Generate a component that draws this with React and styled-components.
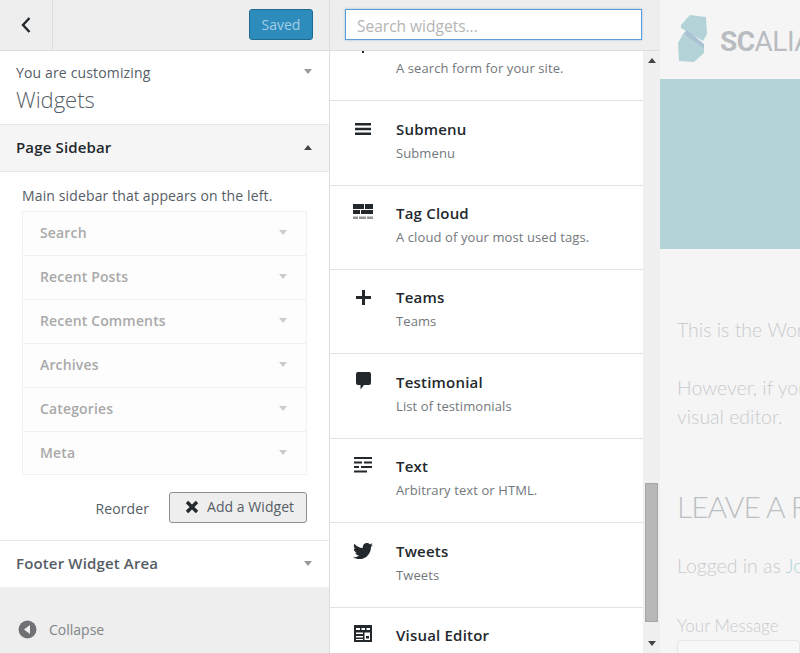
import styled, { createGlobalStyle } from "styled-components";
import { FaTwitter } from "react-icons/fa";

const Global = createGlobalStyle`
    html, body { margin: 0; padding: 0; height: 100%; }
    body { font-family: "Open Sans", sans-serif; background: #f5f5f5; overflow: hidden; }
    #root { height: 100%; }
`

const Page = styled.div`
    display: flex;
    width: 800px;
    height: 653px;
    overflow: hidden;
`

const Sidebar = styled.div`
    width: 330px;
    height: 653px;
    flex: none;
    display: flex;
    flex-direction: column;
    background: #eeeeee;
    border-right: 1px solid #dddddd;
    box-sizing: border-box;
`

const TopBar = styled.div`
    height: 51px;
    flex: none;
    display: flex;
    align-items: center;
    justify-content: space-between;
    box-sizing: border-box;
    background: #eeeeee;
    border-bottom: 1px solid #dddddd;
`

const BackButton = styled.div`
    width: 53px;
    height: 50px;
    display: flex;
    align-items: center;
    justify-content: center;
    box-sizing: border-box;
    border-right: 1px solid #dddddd;
    padding-right: 1px;
`

const SavedButton = styled.div`
    width: 64px;
    height: 31px;
    margin: 0 16px 1px 0;
    display: flex;
    align-items: center;
    justify-content: center;
    box-sizing: border-box;
    background: #2e8cbd;
    border: 1px solid #1f6a93;
    border-radius: 3px;
    color: #a3cde3;
    font-size: 14px;
`

const Customizing = styled.div`
    height: 73px;
    flex: none;
    box-sizing: border-box;
    background: #fff;
    padding: 12px 16px 0;
    position: relative;
`

const Small = styled.div`
    font-size: 14px;
    line-height: 19px;
    letter-spacing: 0.15px;
    color: #555d66;
`

const Heading = styled.div`
    font-size: 22px;
    font-weight: 300;
    line-height: 30px;
    margin-top: 2px;
    color: #555d66;
`

const Arrow = styled.span`
    width: 0;
    height: 0;
    border-left: ${p => p.$size || 4}px solid transparent;
    border-right: ${p => p.$size || 4}px solid transparent;
    ${p => p.$up ? "border-bottom" : "border-top"}: ${p => (p.$size || 4) + 1}px solid ${p => p.$color || "#999"};
`

const CornerArrow = styled(Arrow)`
    position: absolute;
    right: 17px;
    top: 18px;
`

const SectionHead = styled.div`
    height: ${p => p.$height}px;
    flex: none;
    box-sizing: border-box;
    display: flex;
    align-items: center;
    justify-content: space-between;
    padding: 0 17px 2px 16px;
    background: ${p => p.$open ? "#f5f5f5" : "#fff"};
    border-top: ${p => p.$open ? "1px solid #e8e8e8" : "none"};
    border-bottom: ${p => p.$open ? "1px solid #e8e8e8" : "none"};
    font-size: 15px;
    font-weight: 600;
    letter-spacing: 0.15px;
    color: ${p => p.$open ? "#23282d" : "#555d66"};
`

const SectionBody = styled.div`
    flex: none;
    height: 369px;
    box-sizing: border-box;
    background: #fff;
    padding: 14px 22px 0;
    border-bottom: 1px solid #e8e8e8;
`

const Note = styled.div`
    font-size: 14px;
    line-height: 19px;
    letter-spacing: 0.13px;
    color: #555d66;
    margin-bottom: 6px;
`

const WidgetList = styled.div`
    width: 285px;
    box-sizing: border-box;
    border: 1px solid #f1f1f1;
    background: #fdfdfd;
`

const WidgetRow = styled.div`
    height: 44px;
    box-sizing: border-box;
    display: flex;
    align-items: center;
    justify-content: space-between;
    padding: 0 19px 2px 17px;
    font-size: 14px;
    font-weight: 600;
    letter-spacing: 0.15px;
    color: #a9a9a9;
    border-bottom: 1px solid #f1f1f1;
    &:last-child { height: 42px; border-bottom: none; }
`

const Actions = styled.div`
    display: flex;
    align-items: center;
    justify-content: flex-end;
    width: 285px;
    margin-top: 17px;
    gap: 20px;
`

const Reorder = styled.div`
    font-size: 14px;
    letter-spacing: 0.1px;
    color: #555d66;
    margin-top: 1px;
`

const AddButton = styled.div`
    width: 138px;
    height: 31px;
    box-sizing: border-box;
    display: flex;
    align-items: center;
    padding: 0 0 2px 15px;
    gap: 8px;
    background: #eeeeee;
    border: 1px solid #8f8f8f;
    border-radius: 3px;
    font-size: 14px;
    letter-spacing: 0.05px;
    color: #555d66;
`

const Collapse = styled.div`
    margin: 33px 0 0 18px;
    display: flex;
    align-items: center;
    gap: 12px;
    font-size: 14px;
    color: #808488;
`

const Middle = styled.div`
    width: 330px;
    height: 653px;
    flex: none;
    display: flex;
    flex-direction: column;
    position: relative;
    background: #fff;
`

const SearchBar = styled(TopBar)`
    padding-left: 15px;
    justify-content: flex-start;
`

const SearchBox = styled.div`
    width: 297px;
    height: 31px;
    margin-bottom: 1px;
    box-sizing: border-box;
    display: flex;
    align-items: center;
    padding: 3px 0 0 11px;
    background: #fff;
    border: 1px solid #5b9dd9;
    box-shadow: 0 0 2px rgba(91, 157, 217, 0.6);
    font-size: 15.5px;
    color: #b5b5b5;
`

const Results = styled.div`
    flex: 1;
    overflow: hidden;
    margin-right: 17px;
`

const ResultsInner = styled.div`
    margin-top: -34.2px;
`

const Result = styled.div`
    height: 84.4px;
    box-sizing: border-box;
    display: flex;
    padding: 17.4px 0 0 21px;
    border-bottom: 1px solid #e2e2e2;
    &:last-child { border-bottom: none; }
`

const ResultIcon = styled.div`
    width: 24px;
    height: 24px;
    flex: none;
    margin-right: 21px;
    color: #23282d;
    display: flex;
    align-items: flex-start;
    justify-content: center;
`

const ResultTitle = styled.div`
    font-size: 15px;
    font-weight: 600;
    line-height: 20px;
    letter-spacing: 0.2px;
    color: #23282d;
`

const ResultDesc = styled.div`
    font-size: 13px;
    line-height: 18px;
    letter-spacing: 0.1px;
    margin-top: 5px;
    color: #72777c;
`

const ScrollTrack = styled.div`
    position: absolute;
    right: 0;
    top: 51px;
    bottom: 0;
    width: 17px;
    background: #f0f0f0;
`

const ScrollThumb = styled.div`
    position: absolute;
    left: 2px;
    top: 432px;
    width: 13px;
    height: 139px;
    box-sizing: border-box;
    background: #b8b8b8;
    border: 1px solid #a6a6a6;
`

const ScrollUp = styled(Arrow)`
    position: absolute;
    left: 5px;
    top: 7px;
`

const ScrollDown = styled(Arrow)`
    position: absolute;
    left: 5px;
    bottom: 7px;
`

const Preview = styled.div`
    flex: 1;
    height: 653px;
    overflow: hidden;
    background: #f5f5f5;
    font-family: Lato, sans-serif;
    font-weight: 300;
    color: #c9cbce;
    white-space: nowrap;
`

const Brand = styled.div`
    height: 79px;
    display: flex;
    align-items: center;
    padding: 0 0 2px 17px;
    box-sizing: border-box;
    gap: 13px;
`

const BrandName = styled.div`
    font-family: Roboto, sans-serif;
    font-size: 28px;
    font-weight: 400;
    color: #b9bcc1;
    margin-top: 6px;
    letter-spacing: -0.5px;
`

const BrandBold = styled.span`
    font-weight: 700;
`

const LogoMark = styled.svg`
    flex: none;
    width: 30px;
    height: 47px;
`

const Banner = styled.div`
    height: 170px;
    background: #b3d3d8;
`

const PreviewText = styled.div`
    padding: 66px 0 0 17px;
    font-size: 19.5px;
    line-height: 29px;
`

const Para = styled.div`
    margin-bottom: 29px;
`

const Leave = styled.div`
    font-size: 30px;
    line-height: 40px;
    letter-spacing: -1px;
    margin: 55px 0 25px;
    color: #bcbfc3;
`

const Link = styled.span`
    color: #b3d3d8;
`

const Label = styled.div`
    font-size: 17px;
    margin-top: 35px;
    line-height: 22px;
`

const MessageBox = styled.div`
    margin-top: 3px;
    height: 60px;
    background: #f7f7f7;
    border: 1px solid #e6e6e6;
    border-radius: 4px;
`

const widgets = ["Search", "Recent Posts", "Recent Comments", "Archives", "Categories", "Meta"];

const BackIcon = () => (
    <svg width="12" height="18" viewBox="0 0 12 18">
        <path d="M9.5 2 L3 9 L9.5 16" fill="none" stroke="#23282d" strokeWidth="2.4" />
    </svg>
);

const CloseIcon = () => (
    <svg width="14" height="14" viewBox="0 0 14 14">
        <path d="M2 2 L12 12 M12 2 L2 12" fill="none" stroke="#23282d" strokeWidth="3.4" />
    </svg>
);

const CollapseIcon = () => (
    <svg width="19" height="19" viewBox="0 0 19 19">
        <circle cx="9.5" cy="9.5" r="9" fill="#6f7175" />
        <path d="M12 5 L12 14 L6 9.5 Z" fill="#f0f0f0" />
    </svg>
);

const Logo = () => (
    <LogoMark viewBox="0 0 30 47">
        <path d="M13 0 L29 2 L30 19 L26 26 L4 13 L4 10 Z" fill="#b3d3d8" />
        <path d="M6 19 L27 34 L27 38 L17 47 L2 46 L1 28 Z" fill="#b3d3d8" />
        <path d="M6 19 L10 15 L27 29 L27 34 Z" fill="#a9c3d2" />
    </LogoMark>
);

const SearchIcon = () => (
    <svg width="16" height="19" viewBox="0 0 16 19">
        <circle cx="8" cy="6" r="5" fill="none" stroke="currentColor" strokeWidth="2" />
        <path d="M7 11h2v8H7z" fill="currentColor" />
    </svg>
);

const MenuIcon = () => (
    <svg width="16" height="12" viewBox="0 0 16 12" style={{ marginTop: 4 }}>
        <path d="M0 0h16v2.400H0zM0 4.800h16v2.400H0zM0 9.600h16V12H0z" fill="currentColor" />
    </svg>
);

const TagIcon = () => (
    <svg width="20" height="15" viewBox="0 0 20 15" style={{ marginTop: 1 }}>
        <path d="M0 0h11v5H0zM12 0h8v5h-8zM0 6h7v4H0zM8 6h12v4H8z" fill="currentColor" />
        <path d="M0 12.500h5V15H0zM6 12.500h7V15H6zM14 12.500h6V15h-6z" fill="currentColor" opacity="0.5" />
    </svg>
);

const PlusIcon = () => (
    <svg width="15" height="15" viewBox="0 0 15 15" style={{ marginTop: 3 }}>
        <path d="M6 0h3v6h6v3H9v6H6V9H0V6h6z" fill="currentColor" />
    </svg>
);

const QuoteIcon = () => (
    <svg width="15" height="18" viewBox="0 0 15 18">
        <path d="M2 0h11a2 2 0 0 1 2 2v9a2 2 0 0 1-2 2H8l-3.500 4.500V13H2a2 2 0 0 1-2-2V2a2 2 0 0 1 2-2z" fill="currentColor" />
    </svg>
);

const TextIcon = () => (
    <svg width="18" height="16" viewBox="0 0 18 16" style={{ marginTop: 1 }}>
        <path d="M0 0h18v2H0zM0 4.500h8v2H0zM10 4.500h8v2h-8zM0 9h5v2H0zM7 9h11v2H7zM0 13.500h13v2H0z" fill="currentColor" />
    </svg>
);

const TweetIcon = () => <FaTwitter size={20} />;

const EditorIcon = () => (
    <svg width="18" height="17" viewBox="0 0 18 17">
        <path d="M0 0h18v17H0z" fill="currentColor" />
        <path d="M2 3h4v2H2zM7.500 3h3.500v2H7.500zM12.500 3h3.500v2h-3.500zM2 7.500h7V9H2zM2 11h7v1.500H2zM2 14h7v1H2zM10.500 7.500H16V15h-5.500z" fill="#fff" />
        <path d="M12 11h3v2.500h-3z" fill="currentColor" />
    </svg>
);

const results = [
    { title: "Search", desc: "A search form for your site.", icon: <SearchIcon /> },
    { title: "Submenu", desc: "Submenu", icon: <MenuIcon /> },
    { title: "Tag Cloud", desc: "A cloud of your most used tags.", icon: <TagIcon /> },
    { title: "Teams", desc: "Teams", icon: <PlusIcon /> },
    { title: "Testimonial", desc: "List of testimonials", icon: <QuoteIcon /> },
    { title: "Text", desc: "Arbitrary text or HTML.", icon: <TextIcon /> },
    { title: "Tweets", desc: "Tweets", icon: <TweetIcon /> },
    { title: "Visual Editor", desc: "", icon: <EditorIcon /> },
];

export default function App() {
    return (
        <Page>
            <Global />
            <Sidebar>
                <TopBar>
                    <BackButton><BackIcon /></BackButton>
                    <SavedButton>Saved</SavedButton>
                </TopBar>
                <Customizing>
                    <Small>You are customizing</Small>
                    <Heading>Widgets</Heading>
                    <CornerArrow />
                </Customizing>
                <SectionHead $open $height={48}>
                    Page Sidebar
                    <Arrow $up $color="#444" />
                </SectionHead>
                <SectionBody>
                    <Note>Main sidebar that appears on the left.</Note>
                    <WidgetList>
                        {widgets.map((w) => (
                            <WidgetRow key={w}>
                                {w}
                                <Arrow $color="#ccc" />
                            </WidgetRow>
                        ))}
                    </WidgetList>
                    <Actions>
                        <Reorder>Reorder</Reorder>
                        <AddButton><CloseIcon />Add a Widget</AddButton>
                    </Actions>
                </SectionBody>
                <SectionHead $height={46}>
                    Footer Widget Area
                    <Arrow />
                </SectionHead>
                <Collapse><CollapseIcon />Collapse</Collapse>
            </Sidebar>
            <Middle>
                <SearchBar>
                    <SearchBox>Search widgets...</SearchBox>
                </SearchBar>
                <Results>
                    <ResultsInner>
                        {results.map((r) => (
                            <Result key={r.title}>
                                <ResultIcon>{r.icon}</ResultIcon>
                                <div>
                                    <ResultTitle>{r.title}</ResultTitle>
                                    <ResultDesc>{r.desc}</ResultDesc>
                                </div>
                            </Result>
                        ))}
                    </ResultsInner>
                </Results>
                <ScrollTrack>
                    <ScrollUp $up $color="#444" />
                    <ScrollThumb />
                    <ScrollDown $color="#444" />
                </ScrollTrack>
            </Middle>
            <Preview>
                <Brand><Logo /><BrandName><BrandBold>SC</BrandBold>ALIA</BrandName></Brand>
                <Banner />
                <PreviewText>
                    <Para>This is the WordPress</Para>
                    <div>However, if you</div>
                    <Para>visual editor.</Para>
                    <Leave>LEAVE A REPLY</Leave>
                    <div>Logged in as <Link>John</Link></div>
                    <Label>Your Message</Label>
                    <MessageBox />
                </PreviewText>
            </Preview>
        </Page>
    );
}
